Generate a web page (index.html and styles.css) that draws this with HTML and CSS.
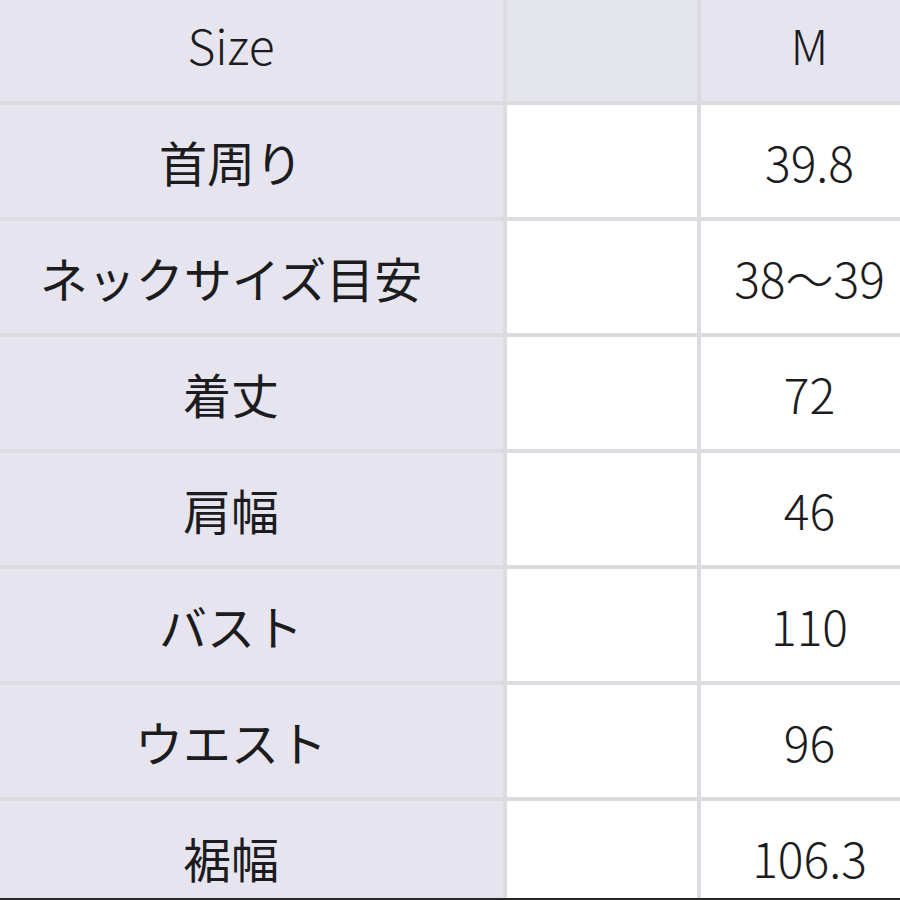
FILE: index.html
```html
<!DOCTYPE html>
<html lang="ja">
<head>
<meta charset="utf-8">
<title>Size</title>
<link rel="stylesheet" href="styles.css">
</head>
<body>
<div class="frame">
  <div class="table">
    <div class="cell label head latin">Size</div>
    <div class="cell blank head"></div>
    <div class="cell value head">M</div>

    <div class="cell label">首周り</div>
    <div class="cell blank"></div>
    <div class="cell value">39.8</div>

    <div class="cell label">ネックサイズ目安</div>
    <div class="cell blank"></div>
    <div class="cell value">38〜39</div>

    <div class="cell label">着丈</div>
    <div class="cell blank"></div>
    <div class="cell value">72</div>

    <div class="cell label">肩幅</div>
    <div class="cell blank"></div>
    <div class="cell value">46</div>

    <div class="cell label">バスト</div>
    <div class="cell blank"></div>
    <div class="cell value">110</div>

    <div class="cell label">ウエスト</div>
    <div class="cell blank"></div>
    <div class="cell value">96</div>

    <div class="cell label">裾幅</div>
    <div class="cell blank"></div>
    <div class="cell value">106.3</div>
  </div>
</div>
</body>
</html>
```

FILE: styles.css
```css
html, body {
  margin: 0;
  padding: 0;
  background: #ffffff;
}

.frame {
  width: 900px;
  height: 900px;
  box-sizing: border-box;
  border-bottom: 2px solid #262626;
  overflow: hidden;
}

.table {
  display: grid;
  grid-template-columns: 503px 190px 199px;
  grid-template-rows: 101px repeat(7, 112px);
  column-gap: 4px;
  row-gap: 4px;
  background: #dcdce0;
  font-family: "Noto Sans CJK JP", "Noto Sans", sans-serif;
  font-size: 48px;
  font-weight: 400;
  color: #1c1c1e;
}

.cell {
  display: flex;
  align-items: center;
  justify-content: center;
  white-space: nowrap;
  line-height: 1;
}

.label {
  background: #e6e5ef;
  padding-right: 41px;
}

.blank {
  background: #ffffff;
}

.value {
  background: #ffffff;
  padding-left: 18px;
  font-weight: 300;
}

.latin {
  font-weight: 300;
}

.head {
  background: #e6e5ef;
  padding-bottom: 14px;
}

.blank.head {
  background: #e4e4ec;
}
```
